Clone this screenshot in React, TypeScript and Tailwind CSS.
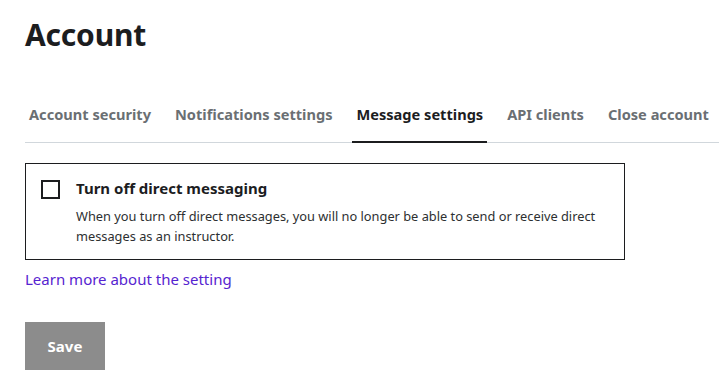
import { useState } from 'react';

const tabs = [
  'Account security',
  'Notifications settings',
  'Message settings',
  'API clients',
  'Close account',
];

export default function App() {
  const [checked, setChecked] = useState(false);
  const active = 'Message settings';

  return (
    <div className="min-h-screen overflow-hidden bg-white pl-[25px] pt-[16px] font-['Noto_Sans',sans-serif] text-[#1c1d1f]">
      <h1 className="text-[30px] font-bold leading-[38px] tracking-[-0.2px]">Account</h1>

      {/* Tabs */}
      <nav className="mt-[50px] flex gap-4 border-b border-[#d1d7dc]">
        {tabs.map((tab) => (
          <button
            key={tab}
            className={
              tab === active
                ? '-mb-px shrink-0 whitespace-nowrap border-b-2 border-[#1c1d1f] px-1 pb-[17px] text-[14.6px] font-bold leading-[20px] text-[#1c1d1f]'
                : '-mb-px shrink-0 whitespace-nowrap border-b-2 border-transparent px-1 pb-[17px] text-[14.6px] font-bold leading-[20px] text-[#6a6f73]'
            }
          >
            {tab}
          </button>
        ))}
      </nav>

      {/* Setting box */}
      <div className="mt-[20px] flex w-[600px] gap-4 border border-[#1c1d1f] px-[15px] pt-[13px] pb-[13px]">
        <button
          onClick={() => setChecked(!checked)}
          className="mt-[3px] h-[19px] w-[19px] shrink-0 border-2 border-[#1c1d1f] bg-white"
        />
        <div className="w-[530px]">
          <div className="text-[15px] font-bold leading-[22px]">Turn off direct messaging</div>
          <p className="mt-[7px] text-[12.8px] leading-[20px] text-[#2d2f31]">
            When you turn off direct messages, you will no longer be able to send or receive direct
            messages as an instructor.
          </p>
        </div>
      </div>

      <a href="#" className="mt-[8px] block text-[15px] leading-[22px] text-[#5624d0]">
        Learn more about the setting
      </a>

      <button className="mt-[32px] h-[48px] w-[80px] bg-[#8c8c8c] text-[15px] font-bold text-white">
        Save
      </button>
    </div>
  );
}
